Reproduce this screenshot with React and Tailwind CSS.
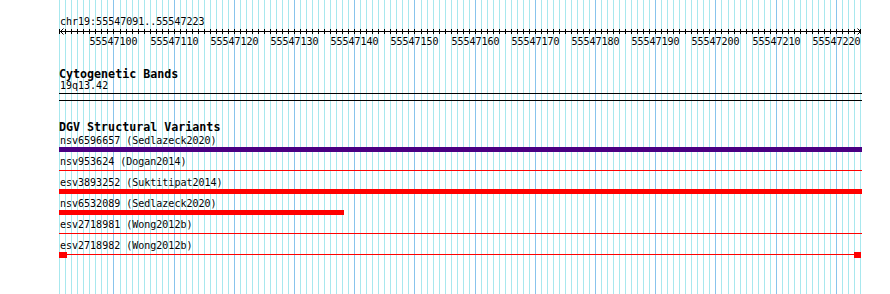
import React from 'react';

const START = 55547091;
const BASES = 133;
const X0 = 59.8;
const STEP = 6.02;

// pixel-crisp x for the left edge of base k
const px = (k) => Math.floor(X0 + STEP * k) + 0.5;

const Grid = () => {
  const lines = [];
  for (let k = 0; k <= BASES; k++) {
    lines.push(
      <line
        key={k}
        x1={px(k)}
        x2={px(k)}
        y1={0}
        y2={294}
        stroke={k % 10 === 9 ? '#88c4ec' : '#a8e8ee'}
        strokeWidth={1}
      />
    );
  }
  return (
    <svg className="absolute left-0 top-0" width="890" height="294" viewBox="0 0 890 294">
      {lines}
    </svg>
  );
};

const Ruler = () => {
  const ticks = [];
  const labels = [];
  for (let k = 0; k <= BASES; k++) {
    ticks.push(<line key={k} x1={px(k)} x2={px(k)} y1={29} y2={34} stroke="#000" strokeWidth={1} />);
    if (k % 10 === 9) {
      labels.push(
        <text key={k} x={px(k)} y={44.5} textAnchor="middle" fill="#000">
          {START + k}
        </text>
      );
    }
  }
  return (
    <svg width="803" height="18" viewBox="59 28 803 18" className="block">
      <line x1={60} x2={861} y1={31.5} y2={31.5} stroke="#000" strokeWidth={1} />
      <polyline points="63.5,28.5 60.5,31.5 63.5,34.5" fill="none" stroke="#000" strokeWidth={1} />
      <polyline points="857.5,28.5 860.5,31.5 857.5,34.5" fill="none" stroke="#000" strokeWidth={1} />
      {ticks}
      {labels}
    </svg>
  );
};

const features = [
  { label: 'nsv6596657 (Sedlazeck2020)', type: 'bar', color: 'bg-[#4b0082]', full: true },
  { label: 'nsv953624 (Dogan2014)', type: 'line' },
  { label: 'esv3893252 (Suktitipat2014)', type: 'bar', color: 'bg-[#ff0000]', full: true },
  { label: 'nsv6532089 (Sedlazeck2020)', type: 'bar', color: 'bg-[#ff0000]', full: false },
  { label: 'esv2718981 (Wong2012b)', type: 'line' },
  { label: 'esv2718982 (Wong2012b)', type: 'ends' },
];

const Glyph = ({ f }) => {
  if (f.type === 'bar') {
    return <div className={`h-[5px] ${f.color} ${f.full ? 'w-full' : 'w-[285px]'}`} />;
  }
  if (f.type === 'line') {
    return (
      <div className="h-[5px]">
        <div className="mt-[2px] h-px w-full bg-[#ff0000]" />
      </div>
    );
  }
  return (
    <div className="h-[6px] flex">
      <div className="w-[8px] h-[6px] bg-[#ff0000]" />
      <div className="flex-1 mt-[2px] h-px bg-[#ff0000]" />
      <div className="w-[7px] h-[6px] bg-[#ff0000] mr-[1px]" />
    </div>
  );
};

export default function App() {
  return (
    <div className="w-[890px] h-[294px] relative bg-white overflow-hidden">
      <Grid />
      <div className="relative ml-[59px] w-[803px] pt-[16px] flex flex-col font-['DejaVu_Sans_Mono',monospace] text-[10px] text-black">
        <div className="h-[12px] leading-[12px] pl-[1px] whitespace-pre">chr19:55547091..55547223</div>
        <Ruler />

        {/* Cytogenetic Bands */}
        <div className="mt-[22px] h-[12px] leading-[12px] text-[11.67px] font-bold whitespace-pre">Cytogenetic Bands</div>
        <div className="h-[12px] leading-[12px] pl-[1px]">19q13.42</div>
        <div className="mt-[1px] h-px w-full bg-black" />
        <div className="mt-[6px] h-px w-full bg-black" />

        {/* DGV Structural Variants */}
        <div className="mt-[20px] h-[13px] leading-[13px] text-[11.67px] font-bold whitespace-pre">DGV Structural Variants</div>
        <div className="mt-[1px] flex flex-col gap-[4px]">
          {features.map((f, i) => (
            <div key={i} className="flex flex-col">
              <div className="h-[12px] leading-[12px] pl-[1px] whitespace-pre">{f.label}</div>
              <Glyph f={f} />
            </div>
          ))}
        </div>
      </div>
    </div>
  );
}
